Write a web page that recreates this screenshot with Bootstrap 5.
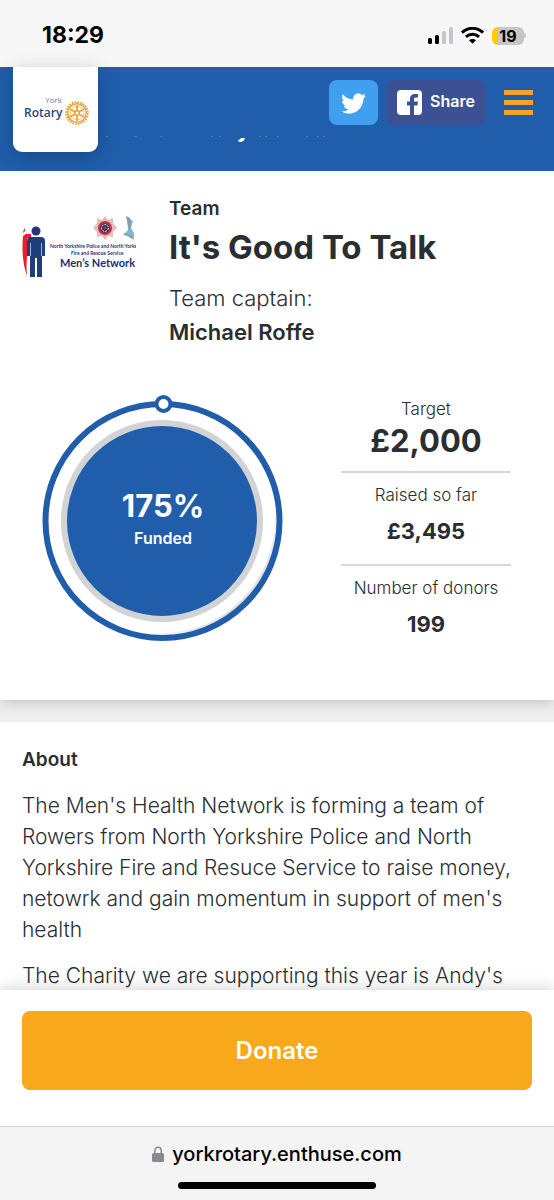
<!DOCTYPE html>
<html lang="en">
<head>
<meta charset="utf-8">
<meta name="viewport" content="width=device-width, initial-scale=1">
<title>It's Good To Talk – York Rotary</title>
<link href="https://cdn.jsdelivr.net/npm/bootstrap@5.3.0/dist/css/bootstrap.min.css" rel="stylesheet">
<style>
  :root { --brand: #205daa; --ink: #2a2e33; --accent: #f8a81b; }
  body { font-family: Inter, "Open Sans", sans-serif; color: var(--ink); background: #fff; font-size: 21px; }
  .status-bar { background: #f7f7f7; height: 67px; padding: 4px 28px 0 42px; color: #000; font-size: 23px; font-weight: 700; }
  .battery { background: linear-gradient(90deg, #fc0 20%, #c6c6c8 20%); border-radius: 6px; width: 32px; height: 18px; font-size: 16px; line-height: 18px; }
  .battery-tip { width: 2px; height: 5px; background: #c6c6c8; border-radius: 0 2px 2px 0; }
  .site-header { background: var(--brand); height: 104px; padding: 0 21px 0 13px; }
  .logo-tab { width: 85px; height: 85px; background: #fff; border-radius: 0 0 9px 9px; box-shadow: 0 4px 18px rgba(0,0,0,.22); }
  .header-actions { padding-top: 13px; }
  .social { height: 45px; border: 0; border-radius: 8px; color: #fff; font-size: 16px; font-weight: 600; }
  .social-tw { width: 49px; background: #419ff0; }
  .social-fb { width: 100px; background: #3c5194; }
  .menu-btn { width: 29px; height: 45px; border: 0; background: none; margin-left: 10px; }
  .header-title { left: 100px; top: 69px; width: 240px; height: 8px; }
  .hero-block { padding: 24px 22px 43px; box-shadow: 0 2px 14px rgba(0,0,0,.2); z-index: 1; }
  .team-logo { width: 114px; height: 114px; }
  .team-text { margin-left: 33px; }
  .kicker { font-size: 19px; line-height: 28px; font-weight: 600; }
  .team-name { font-size: 33px; line-height: 49px; font-weight: 700; }
  .captain { font-size: 22px; line-height: 34px; margin-top: 9px; }
  .captain strong, .about-title { font-weight: 600; }
  .funding { margin-top: 45px; padding-right: 21px; padding-left: 20px; }
  .dial { width: 242px; height: 248px; }
  .dial-text { inset: 0; color: #fff; padding-top: 2px; font-weight: 600; font-size: 16px; line-height: 26px; }
  .dial-text strong { font-size: 31px; line-height: 38px; font-weight: 700; }
  .stats { width: 170px; font-size: 17px; line-height: 26px; padding-top: 2px; }
  .stats dd { font-weight: 700; font-size: 22px; line-height: 36px; padding: 5px 0 0; }
  .stats dd.goal { font-size: 31px; padding: 1px 0 0; }
  .stats .stat + .stat { border-top: 2px solid #d5d7da; padding-top: 9px; }
  .stats .stat { padding-bottom: 15px; }
  .stats .stat:first-child { padding-bottom: 12px; }
  .gap-band { height: 22px; background: #efefef; }
  .about { padding: 23px 22px 0; line-height: 31px; font-weight: 300; }
  .about-title { font-size: 19px; line-height: 30px; margin-bottom: 15px; }
  .about p { margin-bottom: 15px; }
  .donate-bar { padding: 21px 22px 36px; background: #fff; box-shadow: 0 -2px 14px rgba(0,0,0,.16); z-index: 2; }
  .donate-btn { height: 79px; background: var(--accent); border: 0; border-radius: 8px; color: #fff; font-size: 24px; font-weight: 600; }
  .browser-bar { height: 74px; background: #f4f4f5; border-top: 1px solid #d2d2d4; z-index: 3; color: #000; font-size: 20px; line-height: 24px; font-weight: 500; padding-top: 15px; }
  .browser-bar a { color: inherit; }
  .home-line { width: 198px; height: 7px; border-radius: 4px; background: #000; margin-top: 16px; }
</style>
</head>
<body>
<div class="d-flex flex-column vh-100 overflow-hidden">
  <div class="status-bar d-flex align-items-center flex-shrink-0">
    <span class="me-auto">18:29</span>
    <svg class="me-2" width="25" height="17" viewBox="0 0 25 17" aria-hidden="true"><rect y="11" width="4" height="6" rx="1.5"/><rect x="7" y="8" width="4" height="9" rx="1.5"/><rect x="14" y="4" width="4" height="13" rx="1.5" fill="#c6c6c8"/><rect x="21" width="4" height="17" rx="1.5" fill="#c6c6c8"/></svg>
    <svg class="me-2" width="23" height="17" viewBox="0 0 23 17" fill="none" stroke="#000" stroke-width="3" aria-hidden="true"><path d="M1 5.7C7-.1 16-.1 22 5.7M5 9.8c3.7-3.5 9.3-3.5 13 0"/><path d="M11.5 16.8 8 13.3c2-1.8 5-1.8 7 0z" fill="#000" stroke="none"/></svg>
    <span class="battery text-center">19</span><span class="battery-tip"></span>
  </div>

  <header class="site-header position-relative d-flex align-items-start flex-shrink-0">
    <a class="logo-tab d-flex align-items-center justify-content-center me-auto" href="#" aria-label="York Rotary">
      <svg width="67" height="32" viewBox="0 0 67 32" font-family="Open Sans, sans-serif">
        <text x="40" y="9" text-anchor="end" font-size="8" fill="#66788f">York</text>
        <text x="2" y="23" font-size="12" font-weight="600" fill="#24487c">Rotary</text>
        <g transform="translate(55 19)" fill="none" stroke="#eba23c">
          <circle r="10.8" stroke-width="2" stroke-dasharray="1.7 1.13"/><circle r="9.3" stroke-width="1.5"/><circle r="6.8" stroke-width="1" opacity=".6"/>
          <circle r="2.3" stroke-width="1.5"/>
          <path stroke-width="1.8" d="M0-2.5V-8M0 2.5V8M2.2-1.3 7-4M2.2 1.3 7 4M-2.2-1.3-7-4M-2.2 1.3-7 4"/>
        </g>
      </svg>
    </a>
    <svg class="header-title position-absolute" viewBox="0 0 240 8" aria-hidden="true"><g fill="#7da3d3"><path opacity=".4" d="M6 0h2v1H6zM34 0h3v1h-3zM60 0h3v1h-3zM111 0h2v1h-2zM119 0h2v1h-2zM159 0h2v1h-2zM165 0h2v1h-2zM177 0h2v1h-2zM206 0h2v1h-2zM217 0h2v1h-2zM223 0h2v1h-2z"/></g><path fill="#fff" d="M141 2h4q-1 4-5 4-2 0-2-2 2 0 3-2z"/></svg>
    <div class="header-actions d-flex align-items-start gap-2">
      <button class="social social-tw p-0" type="button" aria-label="Share on Twitter">
        <svg width="25" height="25" viewBox="0 0 24 24" fill="#fff"><path d="M23.95 4.57a10 10 0 0 1-2.82.77 4.96 4.96 0 0 0 2.16-2.72 9.9 9.9 0 0 1-3.12 1.19 4.92 4.92 0 0 0-8.39 4.48C7.69 8.1 4.07 6.13 1.64 3.16a4.92 4.92 0 0 0 1.52 6.57 4.9 4.9 0 0 1-2.23-.61v.06a4.92 4.92 0 0 0 3.95 4.83 5 5 0 0 1-2.21.08 4.94 4.94 0 0 0 4.6 3.42A9.87 9.87 0 0 1 0 19.54a14 14 0 0 0 7.55 2.21c9.05 0 14-7.5 14-13.98 0-.21 0-.42-.02-.63a9.94 9.94 0 0 0 2.42-2.57z"/></svg>
      </button>
      <button class="social social-fb p-0 d-flex align-items-center justify-content-center gap-2" type="button">
        <svg width="25" height="25" viewBox="0 0 25 25"><rect width="25" height="25" rx="4" fill="#fff"/><path fill="#3c5194" d="M13 25v-9.5h-3v-4h3V9c0-3.5 2-5 5-5h3v3.5h-2c-1.6 0-2 .8-2 2v2h4l-.6 4H17V25z"/></svg>
        <span class="pb-1">Share</span>
      </button>
      <button class="menu-btn p-0 d-flex align-items-center" type="button" aria-label="Menu">
        <svg width="29" height="25" viewBox="0 0 29 25" fill="#f0a42b"><path d="M0 0h29v5H0zM0 10h29v5H0zM0 20h29v5H0z"/></svg>
      </button>
    </div>
  </header>

  <main class="flex-grow-1 overflow-hidden">
    <section class="hero-block bg-white position-relative">
      <div class="d-flex align-items-start">
        <svg class="team-logo flex-shrink-0" viewBox="0 0 114 114" role="img" aria-label="North Yorkshire Police and Fire and Rescue Service Men's Network" font-family="Lato, sans-serif" font-weight="700" fill="#26337a">
          <path fill="#ee1c25" d="M3 33V36L1 38Q1 36 3 33zM1 41l3-2h5v4H5v18q-1 11 0 20-6-17-4-40z"/>
          <circle cx="14" cy="36" r="4.5"/><path d="M9 42h10q4 0 4 4v15h-3v21h-5V63h-2v19H8V61H5V46q0-4 4-4z" fill="#1f3d7b"/>
          <path stroke="#fff" stroke-width=".6" d="M8.500 48v13M19.500 48v13"/>
          <path fill="#e3bdb8" d="m83 21 3 4 5-2v5l4 5-4 4v5l-5-1-3 4-3-4-5 1v-5l-4-4 4-5v-5l5 2z"/><circle cx="83" cy="33" r="7" fill="#c32d40"/><circle cx="83" cy="33" r="4.6" fill="#27305e"/><circle cx="83" cy="33" r="3.4" fill="none" stroke="#fff" stroke-dasharray="2 1"/><circle cx="83" cy="33" r="1.5" fill="#c32d40"/>
          <path fill="#79b9d5" d="m105 22 6 4-2 7 3 5v6l-5-3-6-1 5-5z"/><path fill="#8c99a5" d="m104 21 4 2 1 8-2 4zM101 38l8 2 3 5-5-3z"/>
          <text x="28" y="53" font-size="5">North Yorkshire Police and North Yorks</text>
          <text x="49" y="60" font-size="5">Fire and Rescue Service</text>
          <text x="38" y="72" font-size="11" fill="#202e78">Men’s Network</text>
        </svg>
        <div class="team-text">
          <div class="kicker">Team</div>
          <h1 class="team-name mb-0">It's Good To Talk</h1>
          <div class="captain"><span class="fw-light">Team captain:</span><br><strong>Michael Roffe</strong></div>
        </div>
      </div>
      <div class="funding d-flex justify-content-between align-items-start">
        <div class="dial position-relative">
          <svg width="242" height="248" viewBox="0 0 242 248" aria-hidden="true">
            <defs><linearGradient id="rim" x1="0" y1="0" x2="1" y2="1"><stop offset=".7" stop-color="#fff"/><stop offset="1" stop-color="#bbb"/></linearGradient></defs>
            <circle cx="120.5" cy="127" r="117" fill="url(#rim)"/>
            <circle cx="119.5" cy="126" r="113" fill="#fff"/>
            <circle cx="120.5" cy="127" r="117" fill="none" stroke="#205daa" stroke-width="6"/>
            <circle cx="120" cy="127" r="98" fill="#205daa" stroke="#d2d3d5" stroke-width="6"/>
            <circle cx="121.5" cy="10" r="7" fill="#fff" stroke="#205daa" stroke-width="4"/>
          </svg>
          <div class="dial-text position-absolute d-flex flex-column align-items-center justify-content-center"><strong>175%</strong>Funded</div>
        </div>
        <dl class="stats text-center mb-0">
          <div class="stat"><dt class="fw-light">Target</dt><dd class="goal mb-0">£2,000</dd></div>
          <div class="stat"><dt class="fw-light">Raised so far</dt><dd class="mb-0">£3,495</dd></div>
          <div class="stat"><dt class="fw-light">Number of donors</dt><dd class="mb-0">199</dd></div>
        </dl>
      </div>
    </section>
    <div class="gap-band"></div>
    <section class="about">
      <h2 class="about-title">About</h2>
      <p>The Men's Health Network is forming a team of Rowers from North Yorkshire Police and North Yorkshire Fire and Resuce Service to raise money, netowrk and gain momentum in support of men's health</p>
      <p>The Charity we are supporting this year is Andy's</p>
    </section>
  </main>

  <div class="donate-bar flex-shrink-0">
    <button class="donate-btn w-100" type="button">Donate</button>
  </div>
  <footer class="browser-bar flex-shrink-0 d-flex flex-column align-items-center">
    <a class="d-flex align-items-center gap-2 text-decoration-none" href="#">
      <svg width="12" height="16" viewBox="0 0 12 16" aria-hidden="true"><rect y="7" width="12" height="9" rx="1.5" fill="#8a8a8e"/><path d="M2.8 8V4.5a3.2 3.2 0 0 1 6.4 0V8" fill="none" stroke="#8a8a8e" stroke-width="1.5"/></svg>
      yorkrotary.enthuse.com
    </a>
    <div class="home-line"></div>
  </footer>
</div>
<script src="https://cdn.jsdelivr.net/npm/bootstrap@5.3.0/dist/js/bootstrap.bundle.min.js"></script>
</body>
</html>
